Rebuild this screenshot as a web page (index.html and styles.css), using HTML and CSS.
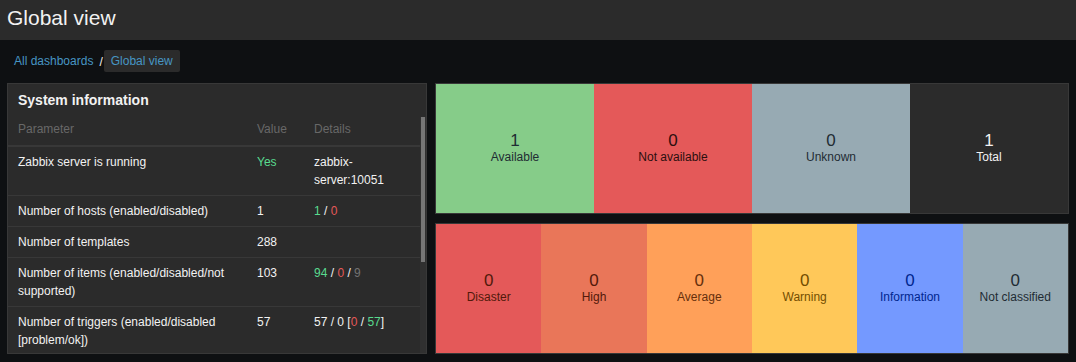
FILE: index.html
```html
<!DOCTYPE html>
<html>
<head>
<title>Global view</title>
<link rel="stylesheet" href="styles.css">
</head>
<body>

<header class="page-header">
  <h1>Global view</h1>
</header>

<nav class="breadcrumbs">
  <a href="#" class="crumb">All dashboards</a>
  <span class="crumb-sep">/</span>
  <a href="#" class="crumb crumb-current">Global view</a>
</nav>

<div class="dashboard">
  <div class="widget sysinfo">
    <div class="widget-head">System information</div>
    <div class="widget-body">
      <table class="info-table">
        <thead>
          <tr>
            <th class="col-param">Parameter</th>
            <th class="col-value">Value</th>
            <th class="col-details">Details</th>
          </tr>
        </thead>
        <tbody>
          <tr>
            <td>Zabbix server is running</td>
            <td class="green">Yes</td>
            <td>zabbix-server:10051</td>
          </tr>
          <tr>
            <td>Number of hosts (enabled/disabled)</td>
            <td>1</td>
            <td><span class="green">1</span> / <span class="red">0</span></td>
          </tr>
          <tr>
            <td>Number of templates</td>
            <td>288</td>
            <td></td>
          </tr>
          <tr>
            <td>Number of items (enabled/disabled/not supported)</td>
            <td>103</td>
            <td><span class="green">94</span> / <span class="red">0</span> / <span class="grey">9</span></td>
          </tr>
          <tr>
            <td>Number of triggers (enabled/disabled [problem/ok])</td>
            <td>57</td>
            <td>57 / 0 [<span class="red">0</span> / <span class="green">57</span>]</td>
          </tr>
        </tbody>
      </table>
      <div class="scroll-track"><div class="scroll-thumb"></div></div>
    </div>
  </div>

  <div class="right-col">
    <div class="widget tiles">
      <div class="tile t-available"><span class="num">1</span><span class="lbl">Available</span></div>
      <div class="tile t-notavail"><span class="num">0</span><span class="lbl">Not available</span></div>
      <div class="tile t-unknown"><span class="num">0</span><span class="lbl">Unknown</span></div>
      <div class="tile t-total"><span class="num">1</span><span class="lbl">Total</span></div>
    </div>

    <div class="widget tiles">
      <div class="tile s-disaster"><span class="num">0</span><span class="lbl">Disaster</span></div>
      <div class="tile s-high"><span class="num">0</span><span class="lbl">High</span></div>
      <div class="tile s-average"><span class="num">0</span><span class="lbl">Average</span></div>
      <div class="tile s-warning"><span class="num">0</span><span class="lbl">Warning</span></div>
      <div class="tile s-info"><span class="num">0</span><span class="lbl">Information</span></div>
      <div class="tile s-nc"><span class="num">0</span><span class="lbl">Not classified</span></div>
    </div>
  </div>
</div>

</body>
</html>
```

FILE: styles.css
```css
body {
  margin: 0;
  background-color: #0e1012;
  font-family: "Liberation Sans", Arial, sans-serif;
  font-size: 12px;
  color: #f2f2f2;
}

.page-header {
  background-color: #2b2b2b;
  height: 40px;
  padding: 0 7px;
  display: flex;
  align-items: center;
}

.page-header h1 {
  margin: 0;
  font-size: 21px;
  font-weight: normal;
  color: #f2f2f2;
  position: relative;
  top: -2px;
}

.breadcrumbs {
  display: flex;
  align-items: center;
  height: 22px;
  margin: 10px 0 0 14px;
}

.crumb {
  color: #4796c4;
  text-decoration: none;
}

.crumb-sep {
  margin: 0 1px 0 6px;
  position: relative;
  top: 1px;
}

.crumb-current {
  background-color: #2b2b2b;
  border-radius: 2px;
  padding: 0 7px;
  line-height: 22px;
}

.dashboard {
  display: flex;
  gap: 8px;
  margin: 11px 7px 0 7px;
}

.widget {
  background-color: #2b2b2b;
  border: 1px solid #383838;
  box-sizing: border-box;
}

.sysinfo {
  width: 420px;
  height: 271px;
  display: flex;
  flex-direction: column;
}

.widget-head {
  font-size: 14px;
  font-weight: bold;
  color: #f2f2f2;
  padding: 8px 10px 0 10px;
  height: 33px;
  box-sizing: border-box;
  flex-shrink: 0;
}

.widget-body {
  flex: 1;
  min-height: 0;
  overflow: hidden;
  position: relative;
}

/* drawn scrollbar, the table continues below */
.scroll-track {
  position: absolute;
  top: 0;
  right: 0;
  bottom: 0;
  width: 6px;
  background-color: #303030;
}

.scroll-thumb {
  margin: 0 1px 0 1px;
  height: 145px;
  background-color: #767676;
}

.info-table {
  width: 412px;
  border-collapse: collapse;
}

.info-table th {
  color: #686868;
  font-weight: normal;
  text-align: left;
  padding: 4px 5px 8px 5px;
  line-height: 16px;
  border-bottom: 2px solid #383838;
}

.info-table td {
  vertical-align: top;
  padding: 6px 5px 6px 5px;
  line-height: 18px;
  border-bottom: 1px solid #383838;
}

.info-table tbody tr:last-child td {
  border-bottom: none;
}

.info-table th:first-child,
.info-table td:first-child {
  padding-left: 10px;
}

.col-param {
  width: 229px;
}

.col-value {
  width: 47px;
}

.green {
  color: #59db8f;
}

.red {
  color: #e45959;
}

.grey {
  color: #737373;
}

.right-col {
  flex: 1;
  display: flex;
  flex-direction: column;
  gap: 9px;
}

.tiles {
  display: flex;
  height: 131px;
}

.tile {
  flex: 1;
  display: flex;
  flex-direction: column;
  align-items: center;
  justify-content: center;
  padding-bottom: 1px;
  box-sizing: border-box;
}

.tile .num {
  font-size: 17px;
  line-height: 19px;
}

.tile .lbl {
  font-size: 12px;
  line-height: 15px;
}

.t-available { background-color: #86cc89; color: #1f2c33; }
.t-notavail { background-color: #e45959; color: #2b0f0f; }
.t-unknown { background-color: #97aab3; color: #1f2c33; }
.t-total { background-color: #2b2b2b; color: #f2f2f2; }

.s-disaster { background-color: #e45959; color: #52190b; }
.s-high { background-color: #e97659; color: #52190b; }
.s-average { background-color: #ffa059; color: #662f0c; }
.s-warning { background-color: #ffc859; color: #734d00; }
.s-info { background-color: #7499ff; color: #00268e; }
.s-nc { background-color: #97aab3; color: #1f2c33; }
```
